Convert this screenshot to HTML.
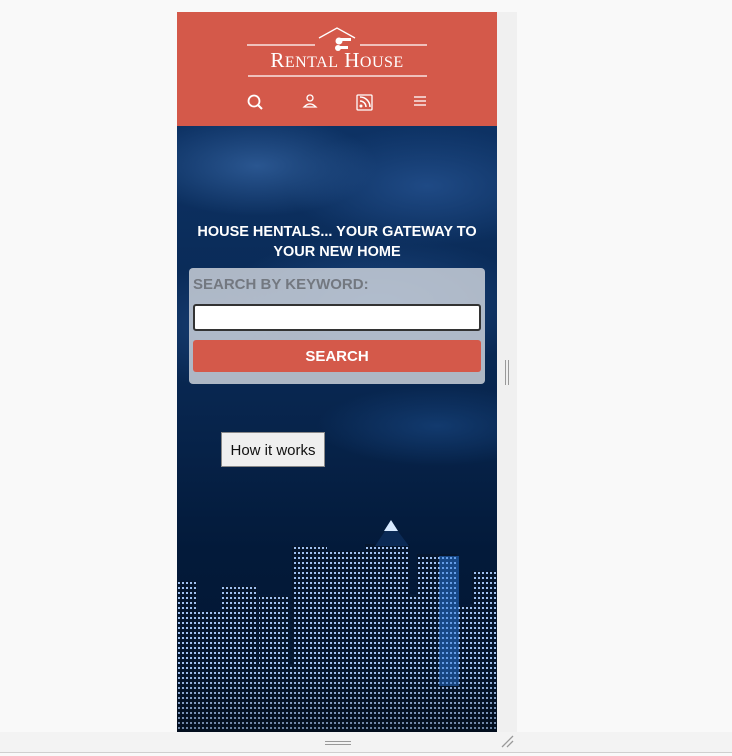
<!DOCTYPE html>
<html><head><style>
body{margin:0;width:732px;height:756px;background:#f9f9f9;position:relative;overflow:hidden;font-family:"Liberation Sans",sans-serif}
.strip{position:absolute;left:497px;top:12px;width:20px;height:720px;background:#f0f0f0}
.bottom{position:absolute;left:0;top:732px;width:732px;height:20px;background:#f3f3f3;border-bottom:1px solid #cfcfcf}
.frame{position:absolute;left:177px;top:12px;width:320px;height:720px;overflow:hidden;background:#021a3a}
.hdr{position:absolute;left:0;top:0;width:320px;height:114px;background:#d4594a}
.hero{position:absolute;left:0;top:114px;width:320px;height:606px;
background:radial-gradient(ellipse 120px 50px at 80px 40px,#2a5690,transparent),radial-gradient(ellipse 140px 60px at 250px 60px,#1f4a85,transparent),radial-gradient(ellipse 160px 70px at 200px 180px,#1c467f,transparent),radial-gradient(ellipse 100px 60px at 40px 200px,#163c70,transparent),radial-gradient(ellipse 120px 40px at 260px 300px,#123a6e,transparent),linear-gradient(#0d3264,#08264f 45%,#031a3a 70%,#021530)}
h1{position:absolute;left:0;top:96px;width:320px;margin:0;text-align:center;color:#fff;font-size:14.5px;line-height:20px;font-weight:bold}
.box{position:absolute;left:12px;top:142px;width:296px;height:116px;background:rgba(210,215,222,.82);border-radius:4px}
.lbl{position:absolute;left:4px;top:8px;color:#737880;font-weight:bold;font-size:15px}
.inp{position:absolute;left:4px;top:36px;width:284px;height:23px;background:#fff;border:2px solid #333;border-radius:3px}
.btn{position:absolute;left:4px;top:72px;width:288px;height:32px;background:#d4594a;border-radius:3px;color:#fff;font-weight:bold;font-size:15px;text-align:center;line-height:34px}
.how{position:absolute;left:44px;top:306px;width:104px;height:35px;background:#efefef;border:1px solid #888;box-sizing:border-box;font-size:15px;line-height:35px;text-align:center;color:#111}
</style></head><body>
<div class="strip"></div>
<div style="position:absolute;left:505px;top:360px;width:1px;height:25px;background:#999;box-shadow:3px 0 #999"></div>
<div class="bottom"></div>
<div style="position:absolute;left:325px;top:741px;width:26px;height:1px;background:#999;box-shadow:0 3px #999"></div>
<svg width="14" height="14" style="position:absolute;left:501px;top:735px"><g stroke="#999" stroke-width="1.3"><line x1="1" y1="12" x2="12" y2="1"/><line x1="6" y1="12" x2="12" y2="6"/></g></svg>
<div class="frame">
 <div class="hdr">
  <svg width="320" height="114" style="position:absolute;left:0;top:0">
   <g stroke="#fff" fill="none" stroke-width="1.3">
    <line x1="70" y1="33" x2="138" y2="33"/><line x1="183" y1="33" x2="250" y2="33"/>
    <polyline points="142,26 160,16 178,26"/>
    <line x1="71" y1="64" x2="250" y2="64"/>
    <circle cx="77" cy="89" r="5.5" stroke-width="1.8"/><line x1="81" y1="93" x2="85" y2="97" stroke-width="2"/>
    <circle cx="133" cy="86" r="3"/><path d="M127 95 q6 -6 12 0 z"/>
    <rect x="180" y="83" width="15" height="15" rx="1"/>
    <line x1="237" y1="85" x2="249" y2="85"/><line x1="237" y1="89" x2="249" y2="89"/><line x1="237" y1="93" x2="249" y2="93"/>
   </g>
   <g fill="#fff"><circle cx="162" cy="29" r="3.5"/><rect x="162" y="26" width="12" height="3"/><circle cx="161" cy="36" r="3"/><rect x="161" y="34" width="10" height="3"/>
   <circle cx="184" cy="94" r="1.5"/><path d="M183 89 a6 6 0 0 1 6 6" stroke="#fff" fill="none" stroke-width="1.5"/><path d="M183 85 a10 10 0 0 1 10 10" stroke="#fff" fill="none" stroke-width="1.5"/></g>
   <text x="160" y="55" text-anchor="middle" fill="#fff" font-family="Liberation Serif,serif" font-size="21" letter-spacing="0.5">R<tspan font-size="16">ENTAL</tspan> H<tspan font-size="16">OUSE</tspan></text>
  </svg>
 </div>
 <div class="hero">
  <svg width="320" height="606" style="position:absolute;left:0;top:0">
   <defs><pattern id="w" width="4" height="5" patternUnits="userSpaceOnUse"><rect width="4" height="5" fill="#05162e"/><rect x="1" y="1" width="2" height="2" fill="#9fc0f0"/></pattern>
   <linearGradient id="g" x1="0" y1="0" x2="0" y2="1"><stop offset="0" stop-color="#000" stop-opacity="0"/><stop offset="1" stop-color="#000" stop-opacity=".35"/></linearGradient></defs>
   <g fill="url(#w)">
    <rect x="0" y="455" width="20" height="151"/><rect x="15" y="485" width="35" height="121"/>
    <rect x="45" y="460" width="35" height="146"/><rect x="82" y="470" width="30" height="136"/>
    <rect x="115" y="420" width="35" height="186"/><rect x="146" y="425" width="45" height="181"/>
    <rect x="188" y="418" width="45" height="188"/><rect x="225" y="470" width="25" height="136"/>
    <rect x="240" y="428" width="40" height="178"/>
    <rect x="265" y="480" width="40" height="126"/><rect x="295" y="445" width="25" height="161"/>
    <rect x="0" y="540" width="320" height="66"/>
   </g>
   <polygon points="198,420 214,396 232,420" fill="#0b2a55"/><polygon points="207,405 214,394 221,405" fill="#d8eaff"/>
   <rect x="262" y="430" width="20" height="130" fill="#2a7ae0" opacity=".5"/>
   <rect x="0" y="540" width="320" height="66" fill="url(#g)"/>
  </svg>
  <h1>HOUSE HENTALS... YOUR GATEWAY TO<br>YOUR NEW HOME</h1>
  <div class="box"><div class="lbl">SEARCH BY KEYWORD:</div><div class="inp"></div><div class="btn">SEARCH</div></div>
  <div class="how">How it works</div>
 </div>
</div>
</body></html>
